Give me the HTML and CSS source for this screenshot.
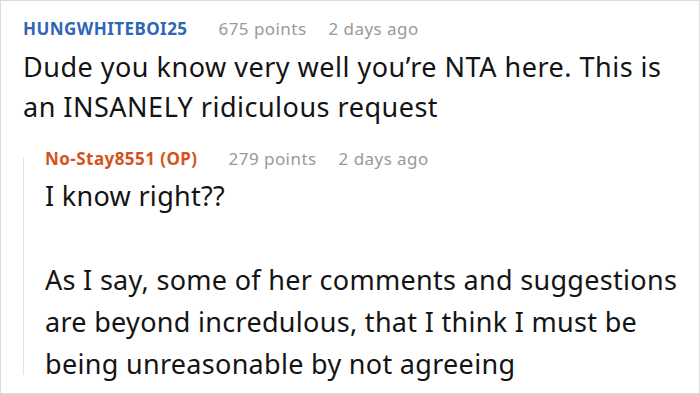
FILE: index.html
```html
<!DOCTYPE html>
<html>
<head>
<meta charset="utf-8">
<link rel="stylesheet" href="styles.css">
</head>
<body>
<div class="frame">
  <div class="comment">
    <div class="meta">
      <span class="user user-blue">HUNGWHITEBOI25</span>
      <span class="info">675 points</span>
      <span class="info">2 days ago</span>
    </div>
    <div class="body">Dude you know very well you’re NTA here. This is an INSANELY ridiculous request</div>
    <div class="reply">
      <div class="meta">
        <span class="user user-op">No-Stay8551 (OP)</span>
        <span class="info">279 points</span>
        <span class="info">2 days ago</span>
      </div>
      <div class="body reply-body">I know right??</div>
      <div class="body reply-body gap"></div>
      <div class="body reply-body">As I say, some of her comments and suggestions are beyond incredulous, that I think I must be being unreasonable by not agreeing</div>
    </div>
  </div>
</div>
</body>
</html>
```

FILE: styles.css
```css
* { box-sizing: border-box; }
html, body { margin: 0; padding: 0; background: #fff; }
.frame {
  width: 700px;
  height: 394px;
  border: 1px solid #dcdcdc;
  overflow: hidden;
  font-family: "Noto Sans", "Open Sans", sans-serif;
  color: #141414;
}
.comment {
  padding: 16px 14px 0 22px;
}
.meta {
  display: flex;
  gap: 22px;
  font-size: 17px;
  line-height: 24px;
  letter-spacing: 0.45px;
  white-space: nowrap;
}
.user { font-weight: 700; margin-right: 9px; }
.user-blue { color: #2f66b5; }
.user-op { color: #d4531c; }
.info { color: #999; }
.body {
  margin-top: 6px;
  font-size: 27px;
  line-height: 40px;
  letter-spacing: 0.5px;
}
.reply {
  position: relative;
  margin-top: 20px;
  padding-left: 22px;
}
.reply::before {
  content: "";
  position: absolute;
  left: 0;
  top: 10px;
  bottom: 10px;
  width: 1px;
  background: #e2e2e2;
}
.reply-body {
  margin-top: 0;
  line-height: 42px;
  letter-spacing: 0.3px;
}
.reply .meta + .reply-body { margin-top: 4px; }
.gap { height: 42px; }
```
